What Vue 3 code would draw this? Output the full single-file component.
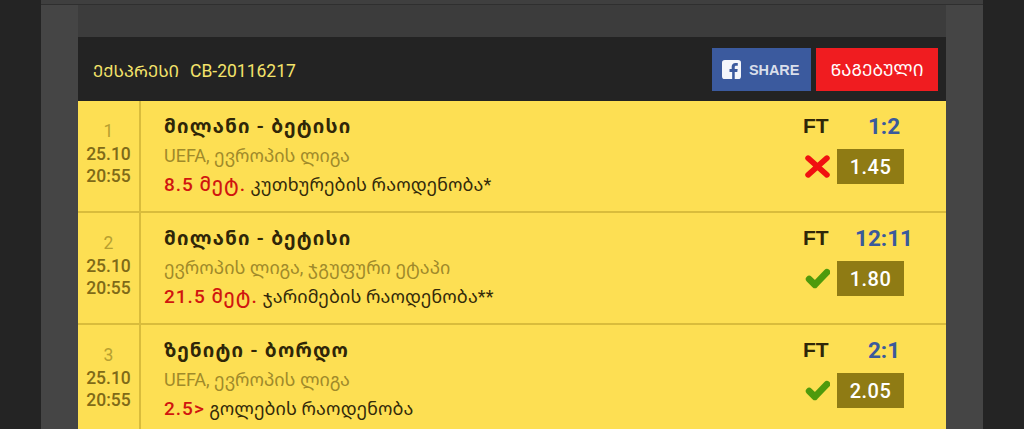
<template>
  <div class="page">
    <div class="wrap">
      <div class="top-strip"></div>
      <div class="content">
        <div class="spacer"></div>
        <div class="head">
          <div class="head-title"><span class="kind">ᲔᲥᲡᲞᲠᲔᲡᲘ</span><span>CB-20116217</span></div>
          <div class="head-btns">
            <a class="btn-share">
              <svg class="fb" viewBox="0 0 20 20" width="19" height="19">
                <path fill="#f4f6fb" d="M3 0h14a3 3 0 0 1 3 3v14a3 3 0 0 1-3 3h-3.600v-7.500h2.700l.4-3.100h-3.100V7.500c0-.9.300-1.500 1.500-1.500h1.700V3.200c-.3 0-1.300-.1-2.400-.1-2.400 0-4 1.400-4 4.100v2.200H7.900v3.100h2.800V20H3a3 3 0 0 1-3-3V3a3 3 0 0 1 3-3z"/>
              </svg>
              <span>SHARE</span>
            </a>
            <a class="btn-won">ᲬᲐᲒᲔᲑᲣᲚᲘ</a>
          </div>
        </div>
        <div class="row" v-for="m in matches" :key="m.n">
          <div class="when">
            <div class="num">{{ m.n }}</div>
            <div>{{ m.date }}</div>
            <div>{{ m.time }}</div>
          </div>
          <div class="info">
            <div class="teams">{{ m.teams }}</div>
            <div class="league">{{ m.league }}</div>
            <div class="bet"><b>{{ m.value }}</b> {{ m.market }}</div>
          </div>
          <div class="result">
            <div class="score-line"><span class="ft">FT</span><span class="score">{{ m.score }}</span></div>
            <div class="odd-line">
              <svg v-if="m.ok" class="mark" viewBox="0 0 24 20" width="25" height="21">
                <path fill="none" stroke="#4e9a0c" stroke-width="6.500" stroke-linejoin="round" stroke-linecap="round" d="M4 10.500l5.500 5.500L21 4"/>
              </svg>
              <svg v-else class="mark" viewBox="0 0 24 22" width="25" height="23">
                <path fill="none" stroke="#f01010" stroke-width="5.500" stroke-linecap="round" d="M3 3l18 16M21 3L3 19"/>
              </svg>
              <span class="odd">{{ m.odd }}</span>
            </div>
          </div>
        </div>
      </div>
    </div>
  </div>
</template>

<script setup>
const matches = [
  { n: 1, date: '25.10', time: '20:55', teams: 'მილანი - ბეტისი', league: 'UEFA, ევროპის ლიგა', value: '8.5 მეტ.', market: 'კუთხურების რაოდენობა*', score: '1:2', odd: '1.45', ok: false },
  { n: 2, date: '25.10', time: '20:55', teams: 'მილანი - ბეტისი', league: 'ევროპის ლიგა, ჯგუფური ეტაპი', value: '21.5 მეტ.', market: 'ჯარიმების რაოდენობა**', score: '12:11', odd: '1.80', ok: true },
  { n: 3, date: '25.10', time: '20:55', teams: 'ზენიტი - ბორდო', league: 'UEFA, ევროპის ლიგა', value: '2.5>', market: 'გოლების რაოდენობა', score: '2:1', odd: '2.05', ok: true }
];
</script>

<style>
html, body { margin: 0; background: #242424; overflow: hidden; }
</style>

<style scoped>
.page {
  height: 429px;
  overflow: hidden;
  background: #242424;
  font-family: Roboto, "Noto Sans Georgian", "DejaVu Sans", sans-serif;
}
.wrap {
  width: 942px;
  margin-left: 41px;
  height: 429px;
  background: #454545;
  display: flex;
  flex-direction: column;
}
.top-strip {
  height: 4px;
  flex: none;
  background: #3f3f3f;
  border-bottom: 1px solid #2f2f2f;
}
.content {
  margin: 0 37px;
  flex: 1;
  background: #3c3c3c;
}
.spacer { height: 32px; }
.head {
  height: 64px;
  background: #232323;
  display: flex;
  align-items: center;
  justify-content: space-between;
  padding: 0 8px 0 15px;
}
.head-title {
  display: flex;
  align-items: baseline;
  gap: 11px;
  color: #f4e36b;
  font-size: 17.500px;
  margin-top: 3px;
}
.kind { font-size: 16.500px; }
.head-btns {
  display: flex;
  gap: 5px;
  height: 43px;
  margin-top: 1px;
}
.btn-share {
  width: 99px;
  box-sizing: border-box;
  padding-left: 10px;
  background: #3b5a9e;
  color: #d9deea;
  display: flex;
  align-items: center;
  gap: 8px;
  font-family: "Liberation Sans", Arial, sans-serif;
  font-weight: 700;
  font-size: 14.500px;
  letter-spacing: -.1px;
}
.fb { flex: none; }
.btn-won {
  width: 122px;
  background: #f01c20;
  color: #fff;
  font-size: 17px;
  display: flex;
  align-items: center;
  justify-content: center;
}
.row {
  height: 112px;
  box-sizing: border-box;
  background: #fddf53;
  border-bottom: 2px solid #d9bc3c;
  display: flex;
}
.when {
  width: 63px;
  flex: none;
  box-sizing: border-box;
  border-right: 2px solid #d9bc3c;
  padding-top: 19px;
  text-align: center;
  color: #7f6a18;
  font-size: 17.500px;
  font-weight: 500;
  line-height: 22.500px;
}
.num { color: #b8a030; font-weight: 400; }
.info {
  flex: 1;
  padding: 13px 0 0 23px;
}
.teams {
  font-size: 19px;
  font-weight: 700;
  color: #2f2608;
  letter-spacing: 1.200px;
  line-height: 26px;
}
.league {
  font-size: 18px;
  color: #a08a2a;
  line-height: 32px;
}
.bet {
  font-size: 18px;
  color: #332a0a;
  line-height: 26px;
  letter-spacing: .1px;
}
.bet b {
  color: #d0160f;
  font-size: 19px;
  font-weight: 500;
  letter-spacing: 1px;
}
.result {
  width: 143px;
  flex: none;
  padding-top: 12px;
}
.score-line {
  display: flex;
  height: 26px;
  align-items: center;
  font-size: 21px;
  font-weight: 700;
}
.ft {
  font-family: "Liberation Sans", Arial, sans-serif;
  color: #2f2608;
  width: 26px;
}
.score {
  width: 110px;
  text-align: center;
  color: #3a5a9c;
  font-family: Roboto, sans-serif;
  font-weight: 700;
  font-size: 22.500px;
}
.odd-line {
  display: flex;
  align-items: center;
  gap: 7px;
  margin-top: 10px;
  padding-left: 2px;
}
.mark { flex: none; }
.odd {
  width: 67px;
  height: 35px;
  background: #8f7b14;
  color: #fff;
  font-size: 20px;
  font-weight: 500;
  letter-spacing: .5px;
  display: flex;
  align-items: center;
  justify-content: center;
}
</style>
